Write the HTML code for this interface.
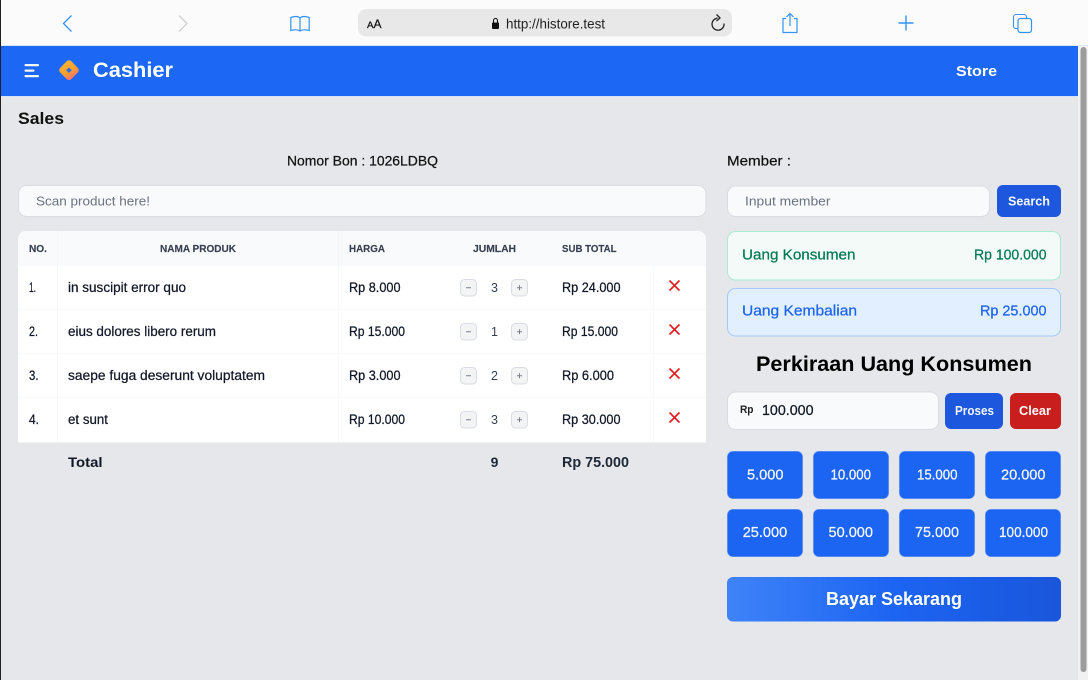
<!DOCTYPE html>
<html><head><meta charset="utf-8"><title>Cashier</title>
<style>
html,body{margin:0;padding:0;background:#e5e7eb;overflow:hidden}
svg{display:block;position:absolute;left:0;top:0}
text{font-family:"Liberation Sans",sans-serif}
.m{stroke-width:.25px}
.b{font-weight:bold}
</style></head><body>
<svg width="1088" height="680" viewBox="0 0 1088 680" xmlns="http://www.w3.org/2000/svg">
<defs>
<linearGradient id="g" x1="0" x2="1" y1="0" y2="0"><stop offset="0" stop-color="#3f83f8"/><stop offset=".5" stop-color="#1c64f2"/><stop offset="1" stop-color="#1a56db"/></linearGradient>
<linearGradient id="lg" gradientUnits="userSpaceOnUse" x1="62" y1="60" x2="74" y2="81"><stop offset="0" stop-color="#fdb62f"/><stop offset=".55" stop-color="#fba02e"/><stop offset="1" stop-color="#f3608a"/></linearGradient>
</defs>
<rect width="1088" height="680" fill="#e5e7eb"/>
<!-- browser chrome -->
<rect width="1088" height="46" fill="#fbfbfb"/>
<rect x="0" y="45" width="1088" height="1" fill="#dbe6f7"/>
<g fill="none" stroke="#3393f8" stroke-width="1.300">
<path d="M71.500 15.500L63.500 23.500L71.500 31.500"/>
<path d="M290.800 17.500C295 16 298 16 300 18C302 16 305 16 309.200 17.500V30.500C305 29.500 302 29.500 300 31C298 29.500 295 29.500 290.800 30.500ZM300 18V31" stroke-width="1.200"/>
<path d="M786 18.500H783V32.500H797V18.500H794M790 26V13.500M786.500 17L790 13.500L793.500 17" stroke-width="1.200"/>
<path d="M906 15.500V30.500M898.500 23H913.500" stroke-width="1.400"/>
<rect x="1013.500" y="14.500" width="13" height="14" rx="2.500" stroke-width="1.100"/>
<rect x="1018" y="18.500" width="13.500" height="14" rx="2.500" fill="#fbfbfb" stroke-width="1.200"/>
</g>
<path d="M179 15.500L187 23.500L179 31.500" fill="none" stroke="#d2d2d2" stroke-width="1.300"/>
<rect x="358" y="9" width="374" height="27.500" rx="8" fill="#e8e8e8"/>
<text x="367" y="28" font-size="9" fill="#111" stroke="#111" class="m" textLength="6.500" lengthAdjust="spacingAndGlyphs">A</text>
<text x="373.500" y="28" font-size="12" fill="#111" stroke="#111" class="m" textLength="8" lengthAdjust="spacingAndGlyphs">A</text>
<rect x="492" y="22.500" width="7" height="6.500" rx="1" fill="#111"/>
<path d="M493.500 22.500V20.500a2 2 0 0 1 4 0V22.500" fill="none" stroke="#111" stroke-width="1.100"/>
<text x="506" y="28.500" font-size="14" fill="#222" textLength="99" lengthAdjust="spacingAndGlyphs">http://histore.test</text>
<path d="M717.500 18.200A6 6 0 1 0 724 23.500" fill="none" stroke="#222" stroke-width="1.300"/>
<path d="M716.500 14.500L720 18L716.500 21" fill="none" stroke="#222" stroke-width="1.300"/>
<!-- header -->
<rect x="0" y="46" width="1078" height="50" fill="#1d67f5"/>
<rect x="0" y="96" width="1078" height="1" fill="#d8e3f6"/>
<g fill="#f4f7ff"><rect x="24.500" y="64" width="14.500" height="2.300" rx="1"/><rect x="24.500" y="69.500" width="10" height="2.300" rx="1"/><rect x="24.500" y="75" width="14.500" height="2.300" rx="1"/></g>
<path d="M69 63.500L75.500 70.200L69 76.800L62.500 70.200Z" fill="#3d6fd8" stroke="url(#lg)" stroke-width="6.500" stroke-linejoin="round"/>
<path d="M69 67.500L71.800 70.200L69 73L66.200 70.200Z" fill="#2f6ce8"/>
<text x="93" y="77" font-size="21" class="b" fill="#fff" textLength="80" lengthAdjust="spacingAndGlyphs">Cashier</text>
<text x="956" y="76" font-size="15" class="b" fill="#fff" textLength="41" lengthAdjust="spacingAndGlyphs">Store</text>
<!-- scrollbar + edge -->
<rect x="1078" y="46" width="10" height="634" fill="#f1f1f1"/>
<rect x="1080.500" y="47" width="6" height="625" rx="3" fill="#9c9c9c"/>
<rect x="0" y="0" width="1" height="680" fill="#222"/>
<!-- left -->
<text x="18" y="124" font-size="17" class="b" fill="#111" textLength="46" lengthAdjust="spacingAndGlyphs">Sales</text>
<text x="287" y="165.500" font-size="14" class="m" stroke="#111" fill="#111" textLength="151" lengthAdjust="spacingAndGlyphs">Nomor Bon : 1026LDBQ</text>
<rect x="18.500" y="185.500" width="687.500" height="31" rx="8" fill="#f9fafb" stroke="#d9dce2"/>
<text x="36" y="205.500" font-size="13" fill="#6b7280" textLength="114" lengthAdjust="spacingAndGlyphs">Scan product here!</text>
<!-- table -->
<path d="M18 239a8 8 0 0 1 8-8H698a8 8 0 0 1 8 8V266H18Z" fill="#f9fafb"/>
<rect x="18" y="266" width="688" height="176.500" fill="#fff"/>
<g fill="#f7f8fa"><rect x="18" y="309" width="688" height="1"/><rect x="18" y="353" width="688" height="1"/><rect x="18" y="397" width="688" height="1"/>
<rect x="57" y="266" width="1" height="176"/><rect x="338" y="266" width="1" height="176"/><rect x="653" y="266" width="1" height="176"/></g>
<g fill="#f5f6f8"><rect x="57" y="231" width="1" height="35"/><rect x="338" y="231" width="1" height="35"/></g>
<g font-size="10.500" class="b" fill="#374151" stroke="#374151" style="stroke-width:.15px">
<text x="29" y="252" textLength="18" lengthAdjust="spacingAndGlyphs">NO.</text>
<text x="160" y="252" textLength="76" lengthAdjust="spacingAndGlyphs">NAMA PRODUK</text>
<text x="349" y="252" textLength="36" lengthAdjust="spacingAndGlyphs">HARGA</text>
<text x="473" y="252" textLength="43" lengthAdjust="spacingAndGlyphs">JUMLAH</text>
<text x="562" y="252" textLength="54.500" lengthAdjust="spacingAndGlyphs">SUB TOTAL</text>
</g>
<g font-size="13.500" fill="#111827" class="m" stroke="#111827">
<text x="29" y="292" textLength="7" lengthAdjust="spacingAndGlyphs">1.</text>
<text x="29" y="336" textLength="9" lengthAdjust="spacingAndGlyphs">2.</text>
<text x="29" y="380" textLength="9.500" lengthAdjust="spacingAndGlyphs">3.</text>
<text x="29" y="424" textLength="10" lengthAdjust="spacingAndGlyphs">4.</text>
<text x="68" y="292" textLength="118" lengthAdjust="spacingAndGlyphs">in suscipit error quo</text>
<text x="68" y="336" textLength="148" lengthAdjust="spacingAndGlyphs">eius dolores libero rerum</text>
<text x="68" y="380" textLength="197" lengthAdjust="spacingAndGlyphs">saepe fuga deserunt voluptatem</text>
<text x="68" y="424" textLength="40" lengthAdjust="spacingAndGlyphs">et sunt</text>
<text x="349" y="292" textLength="51.500" lengthAdjust="spacingAndGlyphs">Rp 8.000</text>
<text x="349" y="336" textLength="56" lengthAdjust="spacingAndGlyphs">Rp 15.000</text>
<text x="349" y="380" textLength="51.500" lengthAdjust="spacingAndGlyphs">Rp 3.000</text>
<text x="349" y="424" textLength="56" lengthAdjust="spacingAndGlyphs">Rp 10.000</text>
<text x="562" y="292" textLength="58.500" lengthAdjust="spacingAndGlyphs">Rp 24.000</text>
<text x="562" y="336" textLength="56" lengthAdjust="spacingAndGlyphs">Rp 15.000</text>
<text x="562" y="380" textLength="52" lengthAdjust="spacingAndGlyphs">Rp 6.000</text>
<text x="562" y="424" textLength="58.500" lengthAdjust="spacingAndGlyphs">Rp 30.000</text>
</g>
<g font-size="12.500" fill="#374151" text-anchor="middle">
<text x="494.500" y="292">3</text><text x="494.500" y="336">1</text><text x="494.500" y="380">2</text><text x="494.500" y="424">3</text>
</g>
<g fill="#f3f4f6" stroke="#d9dce2">
<rect x="460.500" y="279.500" width="16" height="16.500" rx="4"/><rect x="511.500" y="279.500" width="16" height="16.500" rx="4"/>
<rect x="460.500" y="323.500" width="16" height="16.500" rx="4"/><rect x="511.500" y="323.500" width="16" height="16.500" rx="4"/>
<rect x="460.500" y="367.500" width="16" height="16.500" rx="4"/><rect x="511.500" y="367.500" width="16" height="16.500" rx="4"/>
<rect x="460.500" y="411.500" width="16" height="16.500" rx="4"/><rect x="511.500" y="411.500" width="16" height="16.500" rx="4"/>
</g>
<g stroke="#7b828e" stroke-width="1" fill="none">
<path d="M466 287.800h5M517 287.800h5M519.500 285.300v5"/>
<path d="M466 331.800h5M517 331.800h5M519.500 329.300v5"/>
<path d="M466 375.800h5M517 375.800h5M519.500 373.300v5"/>
<path d="M466 419.800h5M517 419.800h5M519.500 417.300v5"/>
</g>
<g stroke="#e02424" stroke-width="1.800" fill="none">
<path d="M669.500 280.500l10 10m0-10l-10 10"/>
<path d="M669.500 324.500l10 10m0-10l-10 10"/>
<path d="M669.500 368.500l10 10m0-10l-10 10"/>
<path d="M669.500 412.500l10 10m0-10l-10 10"/>
</g>
<text x="68" y="467" font-size="14" class="b" fill="#111827" textLength="34.500" lengthAdjust="spacingAndGlyphs">Total</text>
<text x="494.500" y="467" font-size="14" class="b" fill="#1f2937" text-anchor="middle">9</text>
<text x="562" y="467" font-size="14.500" class="b" fill="#1f2937" textLength="67" lengthAdjust="spacingAndGlyphs">Rp 75.000</text>
<!-- right -->
<text x="727" y="165.500" font-size="14" class="m" stroke="#111" fill="#111" textLength="64" lengthAdjust="spacingAndGlyphs">Member :</text>
<rect x="727.500" y="186" width="262" height="30.500" rx="8" fill="#f9fafb" stroke="#d9dce2"/>
<text x="745" y="205.500" font-size="13" fill="#6b7280" textLength="85.500" lengthAdjust="spacingAndGlyphs">Input member</text>
<rect x="997" y="185" width="64" height="32" rx="6" fill="#1c57dd"/>
<text x="1008" y="205.500" font-size="12.500" class="b" fill="#f3f6ff" textLength="42" lengthAdjust="spacingAndGlyphs">Search</text>
<rect x="727.500" y="231.500" width="333" height="48.500" rx="8" fill="#f3faf7" stroke="#a9ecd0"/>
<text x="742" y="259.500" font-size="14.500" class="m" stroke="#057a55" fill="#057a55" textLength="113.500" lengthAdjust="spacingAndGlyphs">Uang Konsumen</text>
<text x="974" y="259.500" font-size="14.500" class="m" stroke="#057a55" fill="#057a55" textLength="72.500" lengthAdjust="spacingAndGlyphs">Rp 100.000</text>
<rect x="727.500" y="288.500" width="333" height="47.500" rx="8" fill="#e1effe" stroke="#a4cafe"/>
<text x="742" y="315.500" font-size="14.500" class="m" stroke="#1c64f2" fill="#1c64f2" textLength="115" lengthAdjust="spacingAndGlyphs">Uang Kembalian</text>
<text x="980" y="315.500" font-size="14.500" class="m" stroke="#1c64f2" fill="#1c64f2" textLength="66.500" lengthAdjust="spacingAndGlyphs">Rp 25.000</text>
<text x="756" y="371" font-size="21" class="b" fill="#000" textLength="276" lengthAdjust="spacingAndGlyphs">Perkiraan Uang Konsumen</text>
<rect x="727.500" y="392" width="211" height="37.500" rx="8" fill="#f9fafb" stroke="#d9dce2"/>
<text x="740" y="413" font-size="11" class="b" fill="#222" textLength="13.500" lengthAdjust="spacingAndGlyphs">Rp</text>
<text x="762" y="415" font-size="14.500" class="m" stroke="#111827" fill="#111827" textLength="51.500" lengthAdjust="spacingAndGlyphs">100.000</text>
<rect x="945" y="393" width="58" height="36" rx="6" fill="#1c57dd"/>
<text x="955" y="415" font-size="12.500" class="b" fill="#f3f6ff" textLength="39" lengthAdjust="spacingAndGlyphs">Proses</text>
<rect x="1010" y="393" width="51" height="36" rx="6" fill="#c81e1e"/>
<text x="1019" y="415" font-size="12.500" class="b" fill="#fff" textLength="32" lengthAdjust="spacingAndGlyphs">Clear</text>
<g fill="#1c64f2" stroke="#5a8ff2" stroke-opacity=".6" stroke-width=".8">
<rect x="727.400" y="451.400" width="75.200" height="47.200" rx="5.500"/><rect x="813.400" y="451.400" width="75.200" height="47.200" rx="5.500"/><rect x="899.400" y="451.400" width="75.200" height="47.200" rx="5.500"/><rect x="985.400" y="451.400" width="75.200" height="47.200" rx="5.500"/>
<rect x="727.400" y="509.400" width="75.200" height="47.200" rx="5.500"/><rect x="813.400" y="509.400" width="75.200" height="47.200" rx="5.500"/><rect x="899.400" y="509.400" width="75.200" height="47.200" rx="5.500"/><rect x="985.400" y="509.400" width="75.200" height="47.200" rx="5.500"/>
</g>
<g font-size="14.500" fill="#f3f6ff" class="m" stroke="#f3f6ff">
<text x="747" y="479.500" textLength="36.500" lengthAdjust="spacingAndGlyphs">5.000</text>
<text x="830.500" y="479.500" textLength="40.500" lengthAdjust="spacingAndGlyphs">10.000</text>
<text x="917" y="479.500" textLength="40.500" lengthAdjust="spacingAndGlyphs">15.000</text>
<text x="1001" y="479.500" textLength="44.500" lengthAdjust="spacingAndGlyphs">20.000</text>
<text x="742.700" y="537" textLength="44.500" lengthAdjust="spacingAndGlyphs">25.000</text>
<text x="828.500" y="537" textLength="44.500" lengthAdjust="spacingAndGlyphs">50.000</text>
<text x="915" y="537" textLength="44" lengthAdjust="spacingAndGlyphs">75.000</text>
<text x="999" y="537" textLength="49" lengthAdjust="spacingAndGlyphs">100.000</text>
</g>
<rect x="727" y="577" width="334" height="44.500" rx="6" fill="url(#g)"/>
<text x="826" y="605" font-size="18.500" class="b" fill="#fff" textLength="136" lengthAdjust="spacingAndGlyphs">Bayar Sekarang</text>
</svg>
</body></html>
